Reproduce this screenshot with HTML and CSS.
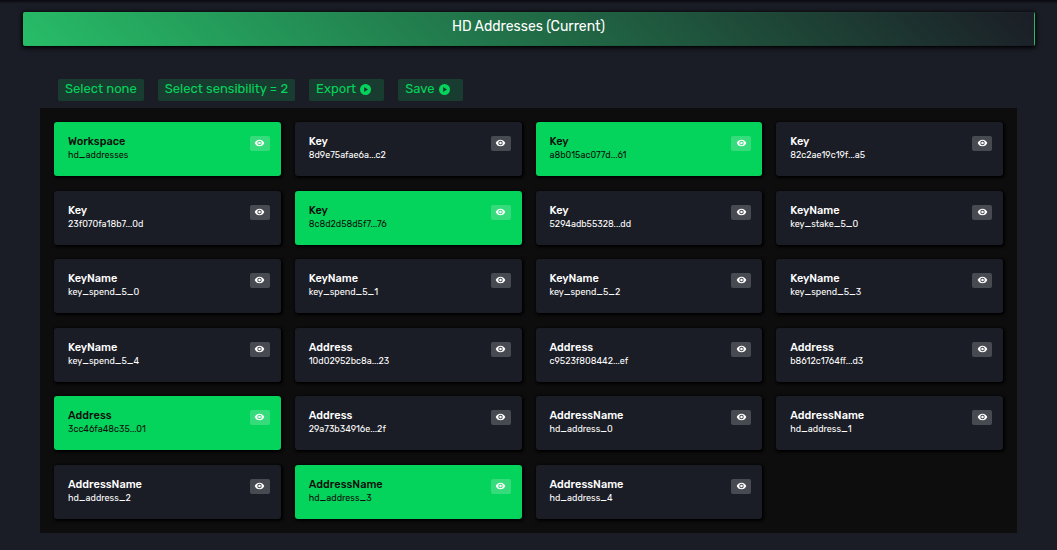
FILE: index.html
```html
<!DOCTYPE html>
<html lang="en">
<head>
<meta charset="utf-8">
<meta name="viewport" content="width=device-width, initial-scale=1">
<title>HD Addresses</title>
<link rel="stylesheet" href="styles.css">
</head>
<body>
<svg class="sprite" aria-hidden="true">
  <symbol id="eye" viewBox="0 0 24 24"><path fill="currentColor" fill-rule="evenodd" d="M12 4C6.500 4 2.200 7.400 0.500 12C2.200 16.600 6.500 20 12 20S21.800 16.600 23.500 12C21.800 7.400 17.500 4 12 4ZM12 17.300A5.300 5.300 0 1 1 12 6.700A5.300 5.300 0 0 1 12 17.300ZM12 9A3 3 0 1 0 12 15A3 3 0 0 0 12 9Z"/></symbol>
  <symbol id="play" viewBox="0 0 24 24"><path fill="currentColor" fill-rule="evenodd" d="M12 0A12 12 0 1 0 12 24A12 12 0 0 0 12 0ZM9 6.500L17.500 12L9 17.500Z"/></symbol>
</svg>
<main class="page">
  <h1 class="banner">HD Addresses (Current)</h1>
  <section class="content">
    <div class="toolbar">
      <button class="action" type="button">Select none</button>
      <button class="action" type="button">Select sensibility = 2</button>
      <button class="action" type="button">Export<svg class="action-icon" aria-hidden="true"><use href="#play"/></svg></button>
      <button class="action" type="button">Save<svg class="action-icon" aria-hidden="true"><use href="#play"/></svg></button>
    </div>
    <ul class="panel">
      <li class="card selected"><div><h2 class="kind">Workspace</h2><p class="value">hd_addresses</p></div><button class="view" type="button" aria-label="View"><svg class="eye"><use href="#eye"/></svg></button></li>
      <li class="card"><div><h2 class="kind">Key</h2><p class="value">8d9e75afae6a...c2</p></div><button class="view" type="button" aria-label="View"><svg class="eye"><use href="#eye"/></svg></button></li>
      <li class="card selected"><div><h2 class="kind">Key</h2><p class="value">a8b015ac077d...61</p></div><button class="view" type="button" aria-label="View"><svg class="eye"><use href="#eye"/></svg></button></li>
      <li class="card"><div><h2 class="kind">Key</h2><p class="value">82c2ae19c19f...a5</p></div><button class="view" type="button" aria-label="View"><svg class="eye"><use href="#eye"/></svg></button></li>
      <li class="card"><div><h2 class="kind">Key</h2><p class="value">23f070fa18b7...0d</p></div><button class="view" type="button" aria-label="View"><svg class="eye"><use href="#eye"/></svg></button></li>
      <li class="card selected"><div><h2 class="kind">Key</h2><p class="value">8c8d2d58d5f7...76</p></div><button class="view" type="button" aria-label="View"><svg class="eye"><use href="#eye"/></svg></button></li>
      <li class="card"><div><h2 class="kind">Key</h2><p class="value">5294adb55328...dd</p></div><button class="view" type="button" aria-label="View"><svg class="eye"><use href="#eye"/></svg></button></li>
      <li class="card"><div><h2 class="kind">KeyName</h2><p class="value">key_stake_5_0</p></div><button class="view" type="button" aria-label="View"><svg class="eye"><use href="#eye"/></svg></button></li>
      <li class="card"><div><h2 class="kind">KeyName</h2><p class="value">key_spend_5_0</p></div><button class="view" type="button" aria-label="View"><svg class="eye"><use href="#eye"/></svg></button></li>
      <li class="card"><div><h2 class="kind">KeyName</h2><p class="value">key_spend_5_1</p></div><button class="view" type="button" aria-label="View"><svg class="eye"><use href="#eye"/></svg></button></li>
      <li class="card"><div><h2 class="kind">KeyName</h2><p class="value">key_spend_5_2</p></div><button class="view" type="button" aria-label="View"><svg class="eye"><use href="#eye"/></svg></button></li>
      <li class="card"><div><h2 class="kind">KeyName</h2><p class="value">key_spend_5_3</p></div><button class="view" type="button" aria-label="View"><svg class="eye"><use href="#eye"/></svg></button></li>
      <li class="card"><div><h2 class="kind">KeyName</h2><p class="value">key_spend_5_4</p></div><button class="view" type="button" aria-label="View"><svg class="eye"><use href="#eye"/></svg></button></li>
      <li class="card"><div><h2 class="kind">Address</h2><p class="value">10d02952bc8a...23</p></div><button class="view" type="button" aria-label="View"><svg class="eye"><use href="#eye"/></svg></button></li>
      <li class="card"><div><h2 class="kind">Address</h2><p class="value">c9523f808442...ef</p></div><button class="view" type="button" aria-label="View"><svg class="eye"><use href="#eye"/></svg></button></li>
      <li class="card"><div><h2 class="kind">Address</h2><p class="value">b8612c1764ff...d3</p></div><button class="view" type="button" aria-label="View"><svg class="eye"><use href="#eye"/></svg></button></li>
      <li class="card selected"><div><h2 class="kind">Address</h2><p class="value">3cc46fa48c35...01</p></div><button class="view" type="button" aria-label="View"><svg class="eye"><use href="#eye"/></svg></button></li>
      <li class="card"><div><h2 class="kind">Address</h2><p class="value">29a73b34916e...2f</p></div><button class="view" type="button" aria-label="View"><svg class="eye"><use href="#eye"/></svg></button></li>
      <li class="card"><div><h2 class="kind">AddressName</h2><p class="value">hd_address_0</p></div><button class="view" type="button" aria-label="View"><svg class="eye"><use href="#eye"/></svg></button></li>
      <li class="card"><div><h2 class="kind">AddressName</h2><p class="value">hd_address_1</p></div><button class="view" type="button" aria-label="View"><svg class="eye"><use href="#eye"/></svg></button></li>
      <li class="card"><div><h2 class="kind">AddressName</h2><p class="value">hd_address_2</p></div><button class="view" type="button" aria-label="View"><svg class="eye"><use href="#eye"/></svg></button></li>
      <li class="card selected"><div><h2 class="kind">AddressName</h2><p class="value">hd_address_3</p></div><button class="view" type="button" aria-label="View"><svg class="eye"><use href="#eye"/></svg></button></li>
      <li class="card"><div><h2 class="kind">AddressName</h2><p class="value">hd_address_4</p></div><button class="view" type="button" aria-label="View"><svg class="eye"><use href="#eye"/></svg></button></li>
    </ul>
  </section>
</main>
</body>
</html>
```
FILE: styles.css
```css
* {
  box-sizing: border-box;
}

body {
  margin: 0;
  background: #1b1d26;
  color: #fff;
  font-family: Rubik, Roboto, sans-serif;
}

.sprite {
  display: none;
}

.page {
  display: flex;
  flex-direction: column;
  min-height: 100vh;
  padding: 12px 22px 17px 23px;
  box-shadow: inset 0 4px 2px -2px #0c0d11;
}

.banner {
  margin: 0;
  padding: 4px 0 8px;
  border: solid transparent;
  border-width: 1px 1px 1px 0;
  border-radius: 2px;
  background: linear-gradient(45deg, #27bd68, #1b1d26);
  box-shadow: 0 1px 4px 1px #000;
  font-size: 14px;
  font-weight: 400;
  line-height: 20px;
  text-align: center;
}

.content {
  display: flex;
  flex: 1;
  flex-direction: column;
  gap: 7px;
  padding: 33px 18px 0 17px;
}

.toolbar {
  display: flex;
  flex-wrap: wrap;
  gap: 14px;
  padding-left: 18px;
}

.action {
  display: flex;
  align-items: center;
  padding: 0 7px 2px;
  border: 0;
  border-radius: 2px;
  background: #183d30;
  color: #04d45b;
  font: inherit;
  font-size: 13px;
  line-height: 20px;
  cursor: pointer;
}

.action-icon {
  width: 11px;
  height: 11px;
  margin: 0 6px 0 4px;
}

.panel {
  display: grid;
  flex: 1;
  grid-template-columns: repeat(4, 1fr);
  align-content: space-between;
  gap: 14px;
  margin: 0;
  padding: 14px;
  background: #0d0d0d;
  list-style: none;
}

.card {
  display: flex;
  align-items: flex-start;
  justify-content: space-between;
  min-height: 54px;
  padding: 14px 11px 14px 14px;
  border-radius: 3px;
  background: #1b1d26;
  box-shadow: 1px 1px 3px 1px #000;
}

.selected {
  background: #04d45b;
  color: #0d0d0d;
}

.kind {
  margin: 0;
  font-size: 11px;
  font-weight: 500;
  line-height: 12px;
}

.value {
  margin: 0;
  font-size: 9px;
  line-height: 14px;
}

.view {
  display: flex;
  align-items: center;
  justify-content: center;
  width: 20px;
  height: 15px;
  padding: 0 0 1px;
  border: 0;
  border-radius: 2px;
  background: rgb(255 255 255 / 20%);
  color: #fff;
  cursor: pointer;
}

.eye {
  width: 11px;
  height: 10px;
}
```
